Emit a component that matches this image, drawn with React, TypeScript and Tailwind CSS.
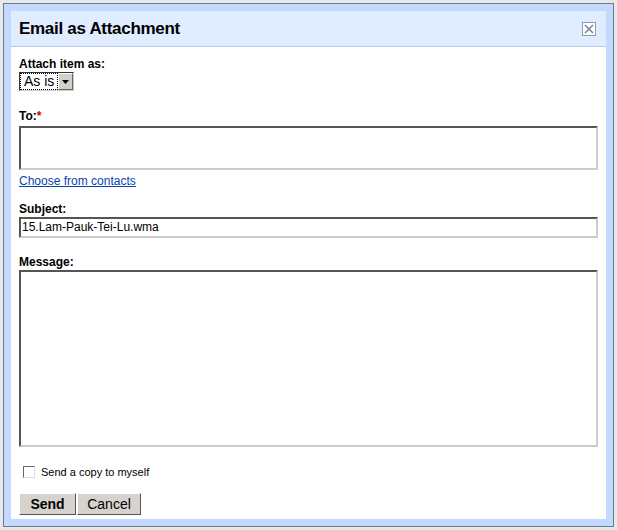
export default function App() {
	return (
		<div className="w-[617px] h-[530px] bg-[#e8e8e8] p-[3px]" style={{ fontFamily: 'Arial, "Liberation Sans", sans-serif' }}>
			<div className="h-full border border-[#6c7c8c] bg-[#c3d9ff] p-[7px]">
				<div className="h-full bg-white flex flex-col">
					<div className="h-[36px] bg-[#e0ecff] border-b border-[#b5c9ea] flex items-center justify-between px-[8px]">
						<span className="text-[17px] font-bold text-black tracking-[-0.3px]">Email as Attachment</span>
						<span className="w-[14px] h-[14px] border border-[#8d9bab] bg-white flex items-center justify-center mr-[2px]">
							<svg width="10" height="10" viewBox="0 0 10 10">
								<path d="M1 1L9 9M9 1L1 9" stroke="#7b8796" strokeWidth="1.6" />
							</svg>
						</span>
					</div>
					<div className="px-[8px] text-[12px] leading-[14px] text-black">
						<div className="mt-[10px] font-bold">Attach item as:</div>
						<div className="flex mt-[1px] w-[55px] h-[19px] border border-[#333] border-r-[#ccc] border-b-[#ccc] whitespace-nowrap">
							<span className="flex-1 px-[3px] border border-dotted border-black leading-[15px] text-[14px]">As is</span>
							<span className="w-[15px] bg-[#d4d0c8] border border-[#fff] border-r-[#666] border-b-[#666] flex items-center justify-center">
								<svg width="7" height="4" viewBox="0 0 7 4"><path d="M0 0H7L3.5 4Z" fill="#000" /></svg>
							</span>
						</div>
						<div className="mt-[18px] font-bold">To:<span className="text-[#c00]">*</span></div>
						<div className="mt-[3px] h-[44px] border-2 border-[#555] border-r-[#ccc] border-b-[#ccc]" />
						<div className="mt-[4px] text-[#0645ad] underline">Choose from contacts</div>
						<div className="mt-[14px] font-bold">Subject:</div>
						<div className="mt-[1px] h-[21px] border-2 border-[#555] border-r-[#ccc] border-b-[#ccc] px-[1px] leading-[17px]">15.Lam-Pauk-Tei-Lu.wma</div>
						<div className="mt-[17px] font-bold">Message:</div>
						<div className="mt-[1px] h-[177px] border-2 border-[#555] border-r-[#ccc] border-b-[#ccc]" />
						<div className="mt-[18px] flex items-center gap-[6px] text-[11px] pl-[4px]">
							<span className="w-[12px] h-[12px] border border-[#666] border-r-[#ddd] border-b-[#ddd] bg-white" />
							Send a copy to myself
						</div>
						<div className="mt-[14px] flex">
							<span className="w-[57px] h-[22px] bg-[#d6d3ce] border border-[#fff] border-r-[#555] border-b-[#555] flex items-center justify-center font-bold text-[14px]">Send</span>
							<span className="ml-[1px] w-[64px] h-[22px] bg-[#d6d3ce] border border-[#fff] border-r-[#555] border-b-[#555] flex items-center justify-center text-[14px]">Cancel</span>
						</div>
					</div>
				</div>
			</div>
		</div>
	);
}
